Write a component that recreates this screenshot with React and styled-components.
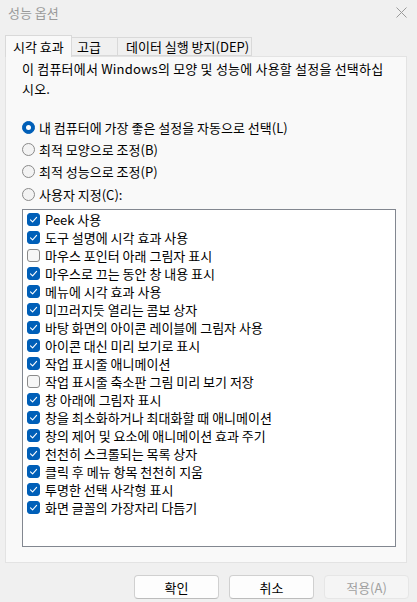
import React from "react"
import styled, { createGlobalStyle } from "styled-components"

const GlobalStyle = createGlobalStyle`
	html, body {
		margin: 0;
		padding: 0;
		background: #f0f0f0;
	}
	body {
		font-family: "Noto Sans CJK KR", "Noto Sans", sans-serif;
		font-size: 13px;
		color: #000;
	}
`

/**
 * Window frame.
 */
const Window = styled.div`
	width: 417px;
	height: 602px;
	background: #f0f0f0;
	display: flex;
	flex-direction: column;
	overflow: hidden;
`

const TitleBar = styled.div`
	height: 24px;
	display: flex;
	align-items: center;
	justify-content: space-between;
	padding: 0 10px 0 8px;
	color: #9a9a9a;
`

const CloseIcon = () => (
	<svg width="11" height="11" viewBox="0 0 11 11" aria-hidden="true">
		<path d="M0.5 0.5 L10.5 10.5 M10.5 0.5 L0.5 10.5" stroke="#9a9a9a" strokeWidth="1" fill="none" />
	</svg>
)

/**
 * Tabs.
 */
const TabRow = styled.div`
	display: flex;
	align-items: flex-end;
	height: 21px;
	margin-top: 11px;
	padding-left: 5px;
	position: relative;
	z-index: 1;
`

const Tab = styled.div`
	box-sizing: border-box;
	height: ${ props => props.$active ? 22 : 19 }px;
	margin-bottom: ${ props => props.$active ? -1 : 0 }px;
	padding-left: ${ props => props.$pad }px;
	width: ${ props => props.$w }px;
	display: flex;
	align-items: center;
	background: ${ props => props.$active ? "#f9f9f9" : "#f0f0f0" };
	border: 1px solid #d9d9d9;
	border-bottom: ${ props => props.$active ? "none" : "1px solid #d9d9d9" };
	border-left: ${ props => props.$first || props.$active ? "1px solid #d9d9d9" : "none" };
	line-height: 1;
	white-space: nowrap;
`

const Pane = styled.div`
	box-sizing: border-box;
	margin: 0 10px 0 5px;
	height: 507px;
	background: #f9f9f9;
	border: 1px solid #e3e3e3;
	padding: 2px 0 0 16px;
`

const Description = styled.p`
	margin: 0;
	line-height: 20px;
	width: 362px;
	letter-spacing: 0.2px;
`

const RadioGroup = styled.div`
	margin-top: 17px;
	display: flex;
	flex-direction: column;
`

const RadioRow = styled.label`
	display: flex;
	align-items: center;
	height: 22.4px;
	gap: 4px;
	line-height: 1;
`

const RadioMark = styled.span`
	box-sizing: border-box;
	width: 13px;
	height: 13px;
	border-radius: 50%;
	flex: none;
	display: flex;
	align-items: center;
	justify-content: center;
	background: ${ props => props.$on ? "#005fb8" : "#f3f3f3" };
	border: 1px solid ${ props => props.$on ? "#005fb8" : "#8a8a8a" };

	&::after {
		content: "";
		display: ${ props => props.$on ? "block" : "none" };
		width: 5px;
		height: 5px;
		border-radius: 50%;
		background: #fff;
	}
`

/**
 * Checkbox list.
 */
const ListBox = styled.div`
	box-sizing: border-box;
	margin-top: 3px;
	width: 374px;
	height: 338px;
	background: #fff;
	border: 1px solid #828790;
	padding: 1px 0 0 4px;
`

const CheckRow = styled.div`
	display: flex;
	align-items: center;
	height: 18px;
	gap: 5px;
	line-height: 1;
	white-space: nowrap;
`

const CheckMark = styled.span`
	box-sizing: border-box;
	width: 13px;
	height: 13px;
	border-radius: 3px;
	flex: none;
	display: flex;
	align-items: center;
	justify-content: center;
	background: ${ props => props.$on ? "#005fb8" : "#f6f6f6" };
	border: 1px solid ${ props => props.$on ? "#005fb8" : "#8b8b8b" };
`

const Tick = () => (
	<svg width="9" height="9" viewBox="0 0 9 9" aria-hidden="true">
		<path d="M1.5 4.8 L3.6 6.8 L7.6 2.3" stroke="#fff" strokeWidth="1.1" fill="none" strokeLinecap="round" strokeLinejoin="round" />
	</svg>
)

/**
 * Footer buttons.
 */
const Footer = styled.div`
	display: flex;
	justify-content: flex-end;
	gap: 10px;
	padding: 12px 8px 0 0;
`

const Button = styled.button`
	box-sizing: border-box;
	width: 85px;
	height: 24px;
	border-radius: 4px;
	font-family: inherit;
	font-size: 13px;
	line-height: 1;
	padding: 0;
	background: ${ props => props.disabled ? "#f5f5f5" : "#fdfdfd" };
	color: ${ props => props.disabled ? "#a0a0a0" : "#000" };
	border: 1px solid ${ props => props.disabled ? "#e6e6e6" : "#d0d0d0" };
	border-bottom-color: ${ props => props.disabled ? "#e6e6e6" : "#bcbcbc" };
`

const options = [
	"내 컴퓨터에 가장 좋은 설정을 자동으로 선택(L)",
	"최적 모양으로 조정(B)",
	"최적 성능으로 조정(P)",
	"사용자 지정(C):",
]

const effects = [
	[ "Peek 사용", true ],
	[ "도구 설명에 시각 효과 사용", true ],
	[ "마우스 포인터 아래 그림자 표시", false ],
	[ "마우스로 끄는 동안 창 내용 표시", true ],
	[ "메뉴에 시각 효과 사용", true ],
	[ "미끄러지듯 열리는 콤보 상자", true ],
	[ "바탕 화면의 아이콘 레이블에 그림자 사용", true ],
	[ "아이콘 대신 미리 보기로 표시", true ],
	[ "작업 표시줄 애니메이션", true ],
	[ "작업 표시줄 축소판 그림 미리 보기 저장", false ],
	[ "창 아래에 그림자 표시", true ],
	[ "창을 최소화하거나 최대화할 때 애니메이션", true ],
	[ "창의 제어 및 요소에 애니메이션 효과 주기", true ],
	[ "천천히 스크롤되는 목록 상자", true ],
	[ "클릭 후 메뉴 항목 천천히 지움", true ],
	[ "투명한 선택 사각형 표시", true ],
	[ "화면 글꼴의 가장자리 다듬기", true ],
]

const App = () => {
	return (
		<Window>
			<GlobalStyle />
			<TitleBar>
				<span>성능 옵션</span>
				<CloseIcon />
			</TitleBar>
			<TabRow>
				<Tab $active $first $w={ 67 } $pad={ 7 }>시각 효과</Tab>
				<Tab $w={ 46 } $pad={ 5 }>고급</Tab>
				<Tab $w={ 134 } $pad={ 8 }>데이터 실행 방지(DEP)</Tab>
			</TabRow>
			<Pane>
				<Description>이 컴퓨터에서 Windows의 모양 및 성능에 사용할 설정을 선택하십시오.</Description>
				<RadioGroup>
					{ options.map( ( label, i ) => (
						<RadioRow key={ label }>
							<RadioMark $on={ i === 0 } />
							<span>{ label }</span>
						</RadioRow>
					) ) }
				</RadioGroup>
				<ListBox>
					{ effects.map( ( [ label, on ] ) => (
						<CheckRow key={ label }>
							<CheckMark $on={ on }>{ on && <Tick /> }</CheckMark>
							<span>{ label }</span>
						</CheckRow>
					) ) }
				</ListBox>
			</Pane>
			<Footer>
				<Button>확인</Button>
				<Button>취소</Button>
				<Button disabled>적용(A)</Button>
			</Footer>
		</Window>
	)
}

export default App
